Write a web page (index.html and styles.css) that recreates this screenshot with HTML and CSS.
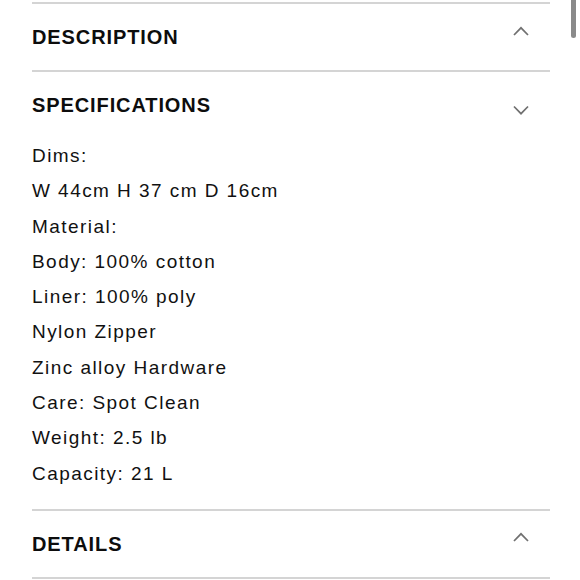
FILE: index.html
```html
<!DOCTYPE html>
<html>
<head>
<meta charset="utf-8">
<link rel="stylesheet" href="styles.css">
</head>
<body>
<div class="scrollbar"></div>
<div class="accordion">
  <section class="panel">
    <div class="panel-head">
      <h2 class="panel-title">DESCRIPTION</h2>
      <svg class="chev" width="16" height="24" viewBox="0 0 16 24"><path d="M1 9 L8 1.8 L15 9" fill="none" stroke="#707070" stroke-width="1.7"/></svg>
    </div>
  </section>
  <section class="panel">
    <div class="panel-head">
      <h2 class="panel-title">SPECIFICATIONS</h2>
      <svg class="chev" width="16" height="24" viewBox="0 0 16 24"><path d="M1 12.5 L8 19.7 L15 12.5" fill="none" stroke="#707070" stroke-width="1.7"/></svg>
    </div>
    <div class="panel-body">
      <p>Dims:</p>
      <p>W 44cm H 37 cm D 16cm</p>
      <p>Material:</p>
      <p>Body: 100% cotton</p>
      <p>Liner: 100% poly</p>
      <p>Nylon Zipper</p>
      <p>Zinc alloy Hardware</p>
      <p>Care: Spot Clean</p>
      <p>Weight: 2.5 lb</p>
      <p>Capacity: 21 L</p>
    </div>
  </section>
  <section class="panel panel-last">
    <div class="panel-head">
      <h2 class="panel-title">DETAILS</h2>
      <svg class="chev" width="16" height="24" viewBox="0 0 16 24"><path d="M1 9 L8 1.8 L15 9" fill="none" stroke="#707070" stroke-width="1.7"/></svg>
    </div>
  </section>
</div>
</body>
</html>
```
FILE: styles.css
```css
html, body {
  margin: 0;
  padding: 0;
  background: #fff;
}
body {
  font-family: "Liberation Sans", Arial, sans-serif;
  color: #111;
  position: relative;
  height: 580px;
  overflow: hidden;
}
.scrollbar {
  position: absolute;
  right: 4px;
  top: -6px;
  width: 5px;
  height: 44px;
  background: #8a8a8a;
  border-radius: 3px;
}
.accordion {
  padding: 2px 30px 0 32px;
}
.panel {
  border-top: 2px solid #d4d4d4;
}
.panel-last {
  border-bottom: 2px solid #d4d4d4;
}
.panel-head {
  box-sizing: border-box;
  height: 66px;
  padding: 1px 21px 0 0;
  display: flex;
  align-items: center;
  justify-content: space-between;
}
.panel-title {
  margin: 0;
  font-size: 20px;
  font-weight: 700;
  letter-spacing: 0.9px;
  color: #0d0d0d;
}
.chev {
  display: block;
}
.panel-body {
  padding: 0 0 18px;
}
.panel-body p {
  margin: 0;
  font-size: 19px;
  line-height: 35.3px;
  letter-spacing: 1.45px;
}
```
